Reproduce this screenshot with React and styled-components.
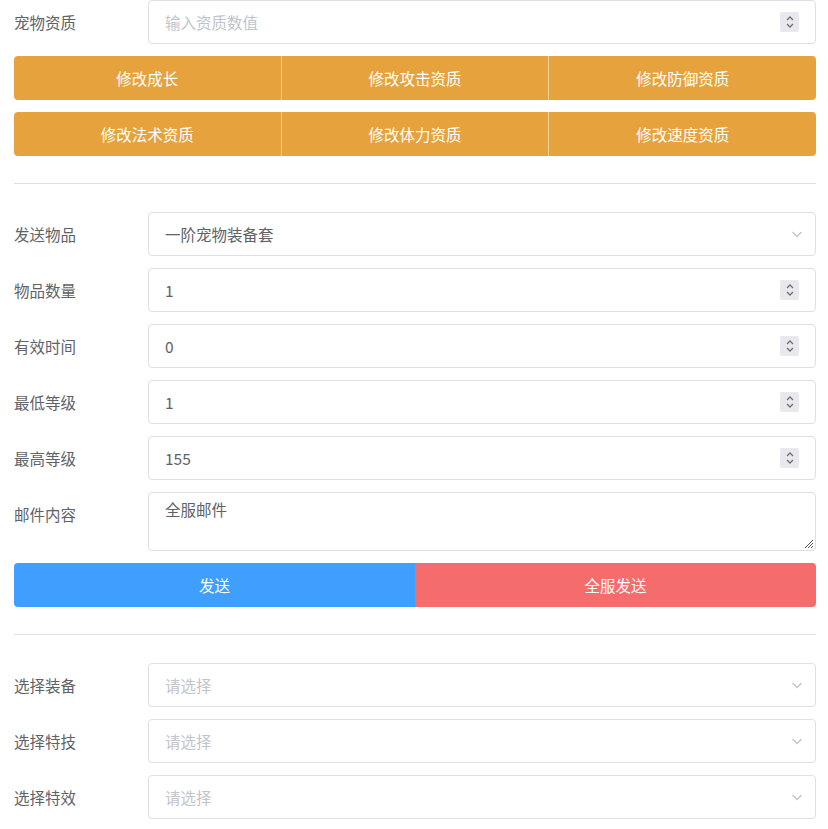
import React from "react";
import styled, { createGlobalStyle } from "styled-components";

const Global = createGlobalStyle`
  html, body {
    margin: 0;
    padding: 0;
    background: #fff;
  }
  body {
    font-family: "Noto Sans CJK SC", "Noto Sans", sans-serif;
    font-size: 15.5px;
    color: #606266;
  }
`;

const Page = styled.div`
  padding: 0 12px 0 14px;
  width: 802px;
`;

const Row = styled.div`
  display: flex;
  align-items: ${(p) => (p.top ? "flex-start" : "center")};
  margin-bottom: 12px;
`;

const Label = styled.label`
  width: 134px;
  flex: none;
  font-size: 15.5px;
  color: #606266;
  line-height: 44px;
`;

const Field = styled.div`
  position: relative;
  flex: 1;
  height: ${(p) => p.h || 44}px;
  box-sizing: border-box;
  border: 1px solid #dcdfe6;
  border-radius: 4px;
  background: #fff;
  display: flex;
  align-items: ${(p) => (p.top ? "flex-start" : "center")};
  padding: ${(p) => (p.top ? "5px 16px" : "0 16px")};
  font-size: 15.5px;
  color: #606266;
`;

const Value = styled.span`
  flex: 1;
  color: ${(p) => (p.placeholder ? "#c0c4cc" : "#606266")};
`;

const Spin = styled.div`
  width: 19px;
  height: 20px;
  background: #e9e9ed;
  border-radius: 2px;
  display: flex;
  align-items: center;
  justify-content: center;
`;

const Arrow = styled.div`
  display: flex;
  align-items: center;
  margin-right: -5px;
`;

const Grip = styled.svg`
  position: absolute;
  right: 1px;
  bottom: 1px;
`;

const Group = styled.div`
  display: flex;
  border-radius: 4px;
  overflow: hidden;
  margin-bottom: 12px;
`;

const Btn = styled.button`
  flex: 1;
  height: 44px;
  border: none;
  border-left: ${(p) => (p.first ? "none" : "1px solid rgba(255,255,255,0.5)")};
  background: ${(p) => p.bg};
  color: #fff;
  font-family: inherit;
  font-size: 15.5px;
  padding: 0;
  cursor: pointer;
`;

const Divider = styled.div`
  height: 1px;
  background: #dcdfe6;
  margin: 27px 0 28px;
`;

const SpinIcon = () => (
  <svg width="10" height="16" viewBox="0 0 10 16" fill="none" stroke="#6d6d75" strokeWidth="1.3">
    <path d="M2 6 L5 3 L8 6" />
    <path d="M2 10 L5 13 L8 10" />
  </svg>
);

const ChevronDown = () => (
  <svg width="14" height="14" viewBox="0 0 14 14" fill="none" stroke="#c0c4cc" strokeWidth="1.3">
    <path d="M2.5 5 L7 9.5 L11.5 5" />
  </svg>
);

const NumberInput = ({ label, value, placeholder }) => (
  <Row>
    <Label>{label}</Label>
    <Field>
      <Value placeholder={placeholder ? 1 : 0}>{value || placeholder}</Value>
      <Spin>
        <SpinIcon />
      </Spin>
    </Field>
  </Row>
);

const Select = ({ label, value, placeholder }) => (
  <Row>
    <Label>{label}</Label>
    <Field>
      <Value placeholder={value ? 0 : 1}>{value || placeholder}</Value>
      <Arrow>
        <ChevronDown />
      </Arrow>
    </Field>
  </Row>
);

const ButtonRow = ({ items }) => (
  <Group>
    {items.map((t, i) => (
      <Btn key={t} first={i === 0} bg="#e6a23c">
        {t}
      </Btn>
    ))}
  </Group>
);

export default function App() {
  return (
    <Page>
      <Global />
      <NumberInput label="宠物资质" placeholder="输入资质数值" />
      <ButtonRow items={["修改成长", "修改攻击资质", "修改防御资质"]} />
      <ButtonRow items={["修改法术资质", "修改体力资质", "修改速度资质"]} />
      <Divider />

      <Select label="发送物品" value="一阶宠物装备套" />
      <NumberInput label="物品数量" value="1" />
      <NumberInput label="有效时间" value="0" />
      <NumberInput label="最低等级" value="1" />
      <NumberInput label="最高等级" value="155" />
      <Row top>
        <Label>邮件内容</Label>
        <Field h={59} top>
          <Value>全服邮件</Value>
          <Grip width="12" height="12" viewBox="0 0 12 12" stroke="#555" strokeWidth="1">
            <path d="M11 3 L3 11 M11 6 L6 11 M11 9 L9 11" />
          </Grip>
        </Field>
      </Row>
      <Group>
        <Btn first bg="#409eff">发送</Btn>
        <Btn first bg="#f56c6c">全服发送</Btn>
      </Group>
      <Divider />

      <Select label="选择装备" placeholder="请选择" />
      <Select label="选择特技" placeholder="请选择" />
      <Select label="选择特效" placeholder="请选择" />
    </Page>
  );
}
